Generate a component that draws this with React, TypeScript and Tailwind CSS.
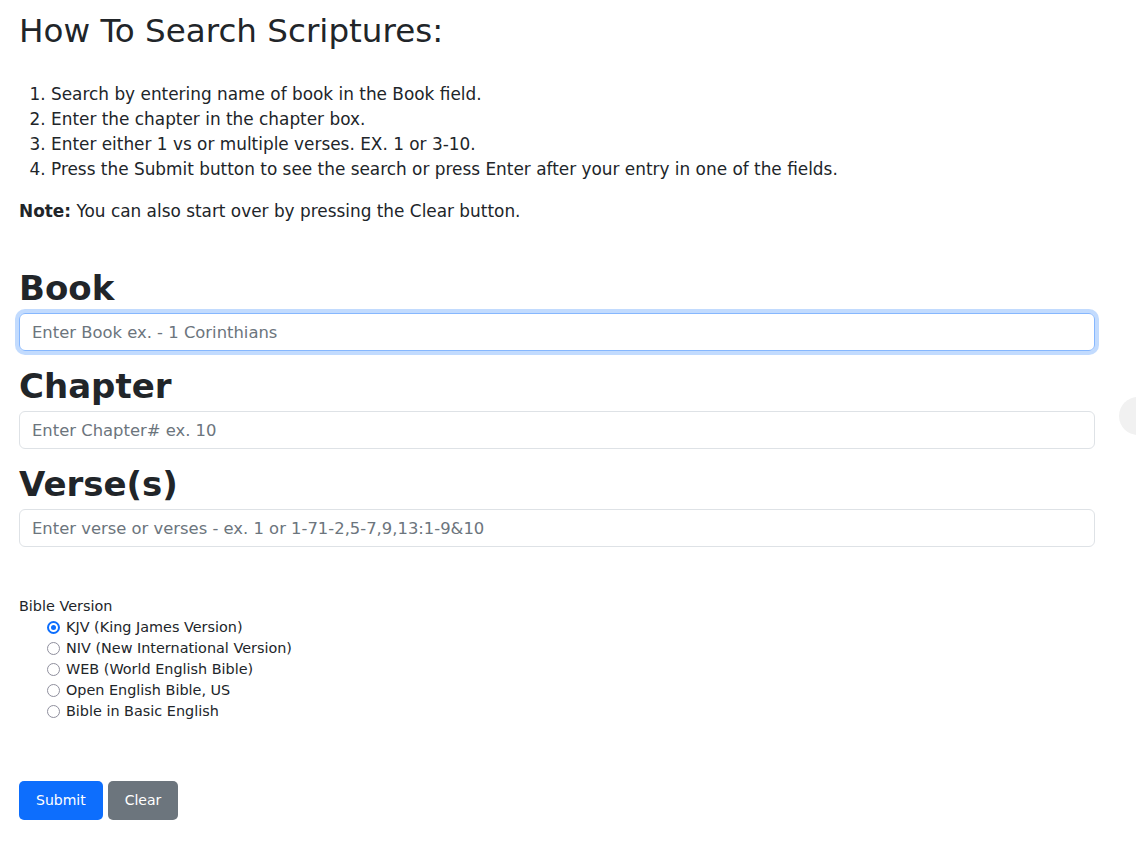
import React, { useState } from 'react';

const versions = [
  { id: 'kjv', label: 'KJV (King James Version)' },
  { id: 'niv', label: 'NIV (New International Version)' },
  { id: 'web', label: 'WEB (World English Bible)' },
  { id: 'oeb', label: 'Open English Bible, US' },
  { id: 'bbe', label: 'Bible in Basic English' },
];

const fields = [
  { id: 'book', title: 'Book', placeholder: 'Enter Book ex. - 1 Corinthians', focused: true },
  { id: 'chapter', title: 'Chapter', placeholder: 'Enter Chapter# ex. 10', focused: false },
  { id: 'verse', title: 'Verse(s)', placeholder: 'Enter verse or verses - ex. 1 or 1-71-2,5-7,9,13:1-9&10', focused: false },
];

const App: React.FC = () => {
  const [version, setVersion] = useState('kjv');

  return (
    <div className="relative min-h-[850px] overflow-hidden bg-white font-['DejaVu_Sans',sans-serif] text-[#212529]">
      <div className="absolute right-[-21px] top-[397px] h-[38px] w-[38px] rounded-full bg-[#f1f1f1]" />
      <div className="w-[1076px] pl-[19px] pt-[12px] box-content">
        <h2 className="mb-[32px] text-[32.6px] font-normal leading-[38px]">How To Search Scriptures:</h2>

        <ol className="list-decimal pl-[32px] text-[16.9px] leading-[25px]">
          <li>Search by entering name of book in the Book field.</li>
          <li>Enter the chapter in the chapter box.</li>
          <li>Enter either 1 vs or multiple verses. EX. 1 or 3-10.</li>
          <li>Press the Submit button to see the search or press Enter after your entry in one of the fields.</li>
        </ol>

        <p className="mt-[17px] text-[16.9px] leading-[24px]">
          <b>Note:</b> You can also start over by pressing the Clear button.
        </p>

        <form className="mt-[44px]" onSubmit={(e) => e.preventDefault()}>
          {fields.map((f) => (
            <div key={f.id} className="mt-[14px] first:mt-0">
              <h1 className="mb-[3px] text-[34px] font-bold leading-[43px]">{f.title}</h1>
              <input
                type="text"
                placeholder={f.placeholder}
                className={
                  f.focused
                    ? 'block h-[38px] w-full rounded-[6px] border border-[#86b7fe] px-[12px] text-[16.4px] shadow-[0_0_0_4px_rgba(13,110,253,0.25)] outline-none placeholder:text-[#6c757d]'
                    : 'block h-[38px] w-full rounded-[6px] border border-[#dee2e6] px-[12px] text-[16.4px] outline-none placeholder:text-[#6c757d]'
                }
              />
            </div>
          ))}

          <div className="mt-[49px] text-[14.4px] leading-[21px]">
            <div>Bible Version</div>
            <div className="pl-[28px]">
              {versions.map((v) => {
                const on = version === v.id;
                return (
                  <label key={v.id} className="flex cursor-pointer items-center gap-[6px]">
                    <input
                      type="radio"
                      name="version"
                      checked={on}
                      onChange={() => setVersion(v.id)}
                      className="sr-only"
                    />
                    <span
                      className={
                        on
                          ? 'flex h-[13px] w-[13px] items-center justify-center rounded-full border-[2px] border-[#0d6efd] bg-white'
                          : 'flex h-[13px] w-[13px] items-center justify-center rounded-full border-[1.5px] border-[#8f8f9d] bg-white'
                      }
                    >
                      {on && <span className="h-[5px] w-[5px] rounded-full bg-[#0d6efd]" />}
                    </span>
                    <span>{v.label}</span>
                  </label>
                );
              })}
            </div>
          </div>

          <div className="mt-[59px] flex gap-[5px]">
            <button type="submit" className="h-[39px] rounded-[5px] bg-[#0d6efd] px-[17px] text-[14px] text-white">
              Submit
            </button>
            <button type="button" className="h-[39px] rounded-[5px] bg-[#6c757d] px-[17px] text-[14px] text-white">
              Clear
            </button>
          </div>
        </form>
      </div>
    </div>
  );
};

export default App;
